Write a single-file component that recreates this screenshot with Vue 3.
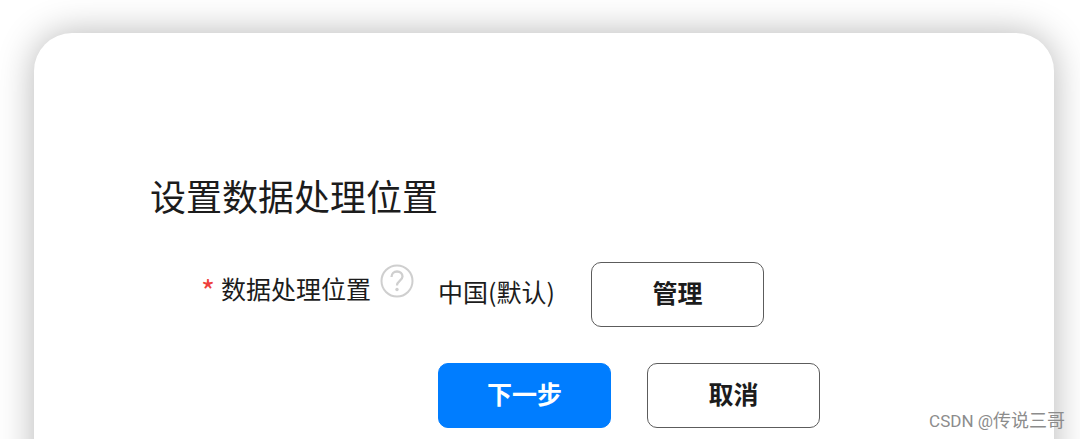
<script setup>
const region = '中国(默认)'
</script>

<template>
  <main class="page">
    <section class="card">
      <h1 class="title">设置数据处理位置</h1>
      <form class="form" @submit.prevent>
        <div class="label">
          <span class="star">*</span>
          <span id="loc" class="name">数据处理位置</span>
          <button type="button" class="help" aria-label="帮助">
            <svg viewBox="0 0 34 34" width="34" height="34" fill="none" stroke="#cfcfcf" stroke-width="2">
              <circle cx="17" cy="17" r="15.5" />
              <path d="M11.500 13c0-3.200 2.400-5.500 5.500-5.500s5.500 2.100 5.500 5.100c0 3.900-5.500 4.400-5.500 9" stroke-width="2.300" />
              <circle cx="17" cy="25.500" r="1.700" fill="#cfcfcf" stroke="none" />
            </svg>
          </button>
        </div>
        <div class="value">
          <output class="region" aria-labelledby="loc">{{ region }}</output>
          <button type="button" class="btn">管理</button>
        </div>
        <div class="actions">
          <button type="submit" class="btn primary">下一步</button>
          <button type="button" class="btn">取消</button>
        </div>
      </form>
    </section>
    <span class="mark">CSDN @<span class="author">传说三哥</span></span>
  </main>
</template>

<style>
body {
  margin: 0;
  background: #fff;
}
</style>

<style scoped>
.page {
  position: relative;
  box-sizing: border-box;
  height: 100vh;
  padding: 33px 26px 0 34px;
  overflow: hidden;
  font-family: "Noto Sans CJK SC", "Liberation Sans", sans-serif;
  color: #1c1c1c;
}
.card {
  box-sizing: border-box;
  min-height: 520px;
  padding: 136px 40px 40px 116px;
  border-radius: 38px;
  background: #fff;
  box-shadow: 0 0 36px rgba(0, 0, 0, 0.29);
}
.title {
  margin: 0;
  font-size: 36px;
  line-height: 52px;
  font-weight: 400;
}
.form {
  display: grid;
  grid-template-columns: 264px 1fr;
  column-gap: 24px;
  row-gap: 36px;
  margin-top: 41px;
}
.label {
  display: flex;
  justify-content: flex-end;
  height: 52px;
  font-size: 25px;
  line-height: 52px;
}
.star {
  margin-right: 6px;
  color: #ee403c;
  font-size: 30px;
  line-height: 56px;
}
.help {
  width: 34px;
  height: 34px;
  margin: 2px 0 0 9px;
  padding: 0;
  border: 0;
  background: none;
}
.help svg {
  display: block;
}
.value {
  display: flex;
  align-items: center;
  gap: 36px;
}
.region {
  padding-bottom: 8px;
  font-size: 25px;
  line-height: 36px;
}
.actions {
  grid-column: 2;
  display: flex;
  gap: 36px;
}
.btn {
  box-sizing: border-box;
  width: 173px;
  height: 65px;
  padding: 0 0 6px;
  border: 1px solid #5c5c5c;
  border-radius: 10px;
  background: #fff;
  color: #1c1c1c;
  font-family: inherit;
  font-size: 25px;
  font-weight: 700;
}
.primary {
  border-color: #007dff;
  background: #007dff;
  color: #fff;
}
.mark {
  position: absolute;
  right: 15px;
  bottom: 5px;
  color: #8c8c8c;
  font-family: Roboto, "Noto Sans CJK SC", sans-serif;
  font-size: 17px;
  line-height: 26px;
}
.author {
  font-size: 18px;
}
</style>
